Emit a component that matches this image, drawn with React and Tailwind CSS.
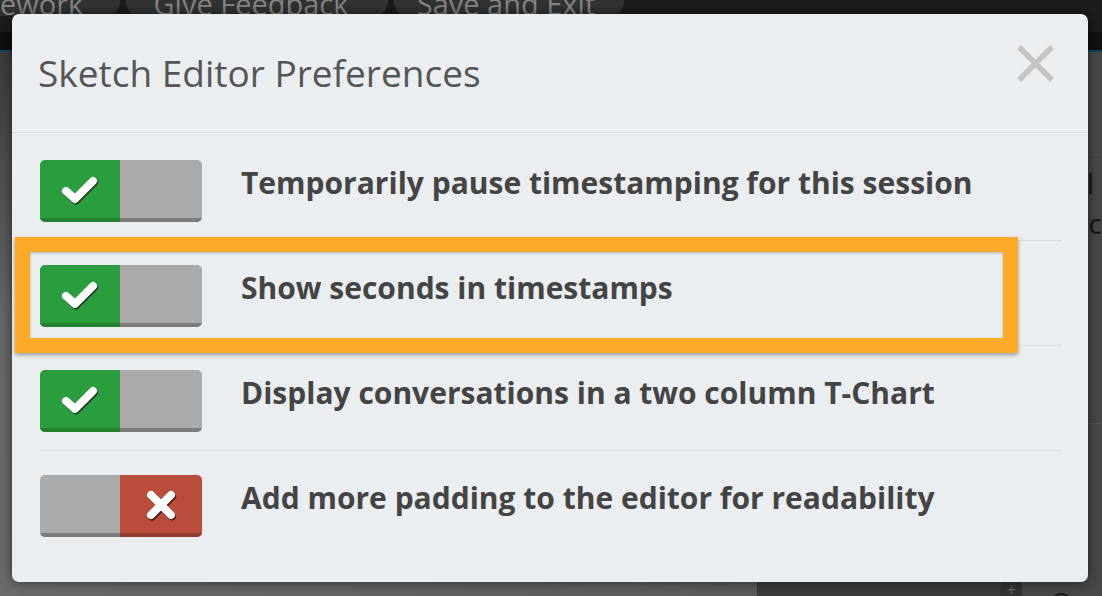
import React from 'react';

const prefs = [
  { label: 'Temporarily pause timestamping for this session', on: true },
  { label: 'Show seconds in timestamps', on: true },
  { label: 'Display conversations in a two column T-Chart', on: true },
  { label: 'Add more padding to the editor for readability', on: false },
];

function CheckMark() {
  return (
    <svg width="40" height="32" viewBox="0 0 40 32">
      <path d="M6 17 L15 25 L33 7" fill="none" stroke="#1d3a22" strokeWidth="8" strokeLinecap="round" strokeLinejoin="round" transform="translate(1 1.5)" />
      <path d="M6 17 L15 25 L33 7" fill="none" stroke="#ffffff" strokeWidth="8" strokeLinecap="round" strokeLinejoin="round" />
    </svg>
  );
}

function CrossMark() {
  return (
    <svg width="34" height="34" viewBox="0 0 34 34">
      <g transform="translate(1 1.5)" stroke="#4a1a12" strokeWidth="8" strokeLinecap="round">
        <path d="M7 7 L27 27" />
        <path d="M27 7 L7 27" />
      </g>
      <g stroke="#ffffff" strokeWidth="8" strokeLinecap="round">
        <path d="M7 7 L27 27" />
        <path d="M27 7 L7 27" />
      </g>
    </svg>
  );
}

function Toggle({ on }) {
  return (
    <div className="flex h-[62px] w-[162px] shrink-0 overflow-hidden rounded-[5px]">
      {on ? (
        <>
          <div className="flex w-[80px] items-center justify-center bg-[#2a9e3c] pb-[3px] shadow-[inset_0_-4px_0_#22812f]">
            <CheckMark />
          </div>
          <div className="flex-1 bg-[#aaaaaa] shadow-[inset_0_-4px_0_#7c7c7c]" />
        </>
      ) : (
        <>
          <div className="w-[80px] bg-[#aaaaaa] shadow-[inset_0_-4px_0_#7c7c7c]" />
          <div className="flex flex-1 items-center justify-center bg-[#b94c3b] pb-[3px] shadow-[inset_0_-4px_0_#933a2d]">
            <CrossMark />
          </div>
        </>
      )}
    </div>
  );
}

export default function App() {
  return (
    <div className="relative h-[596px] w-[1102px] overflow-hidden bg-[#5e5e5e] font-['Open_Sans',sans-serif]">
      {/* page behind the dialog, dimmed */}
      <div className="flex h-[32px] items-end gap-[6px] bg-[#1c1c1c] pb-[16px]">
        <div className="flex h-[40px] w-[120px] items-end rounded-r-[14px] bg-[#333333] text-[29px] text-[#858585]">
          <span className="-mb-[9px] ml-[0px]">ework</span>
        </div>
        <div className="flex h-[40px] w-[262px] items-end justify-center rounded-[14px] bg-[#333333] text-[29px] text-[#858585]">
          <span className="-mb-[9px] mr-[12px]">Give Feedback</span>
        </div>
        <div className="flex h-[40px] w-[230px] items-end justify-center rounded-[14px] bg-[#333333] text-[29px] text-[#858585]">
          <span className="-mb-[9px] mr-[6px]">Save and Exit</span>
        </div>
      </div>
      <div className="h-[18px] bg-[#101010]" />
      <div className="h-[2px] bg-[#0f4560]" />
      <div className="flex h-[544px]">
        <div className="flex w-[763px] flex-col">
          <div className="flex flex-1">
            <div className="w-[60px] bg-gradient-to-b from-[#3b3b3b] via-[#666666] to-[#6a6a6a]" />
            <div className="flex-1 bg-[#555555]" />
          </div>
          <div className="h-[16px] bg-gradient-to-r from-[#6a6a6a] to-[#5a5a5a]" />
        </div>
        <div className="flex w-[245px] flex-col">
          <div className="flex-1 bg-[#4c4c4c]" />
          <div className="h-[16px] bg-[#3b3b3b]" />
        </div>
        <div className="flex flex-1 flex-col bg-[#474747] text-[28px] leading-[40px] text-[#151515]">
          <div className="ml-[82px] mt-[20px] h-[34px] w-[4px] bg-[#151515]" />
          <div className="mt-[48px] border-t border-[#515151] pt-[8px] pl-[71px]">al</div>
          <div className="pl-[71px]">nc</div>
          <div className="mt-[180px] border-t border-[#555555] pt-[44px] pl-[72px]">e</div>
          <div className="mt-auto flex items-end gap-[28px] pl-[0px]">
            <div className="flex h-[14px] w-[22px] items-start justify-center rounded-t-[3px] bg-[#333333] text-[16px] leading-[16px] text-[#666666]">+</div>
            <span className="-mb-[26px] leading-[40px] text-[#1a1a1a]">Qu</span>
          </div>
        </div>
      </div>

      {/* dialog */}
      <div className="absolute left-[12px] top-[14px] flex h-[568px] w-[1076px] flex-col rounded-[7px] bg-[#eaeef0] shadow-[0_0_12px_rgba(0,0,0,0.55)]">
        <div className="flex h-[119px] shrink-0 items-start justify-between border-b border-[#dcdfe1] pl-[26px] pr-[33px]">
          <h1 className="pt-[36px] text-[37px] leading-[46px] text-[#555555]">Sketch Editor Preferences</h1>
          <svg className="mt-[30px]" width="39" height="39" viewBox="0 0 39 39">
            <path d="M3 3 L36 36 M36 3 L3 36" stroke="#c4c4c4" strokeWidth="5.5" />
          </svg>
        </div>
        <div className="pl-[28px] pr-[26px] pt-[3px]">
          {prefs.map((p, i) => (
            <div
              key={p.label}
              className={`flex items-start gap-[39px] pt-[24px] pb-[18px] ${i < prefs.length - 1 ? 'border-b border-[#dadddf]' : ''}`}
            >
              <Toggle on={p.on} />
              <div className="pt-[6px] text-[30px] font-bold leading-[34px] text-[#444444]">{p.label}</div>
            </div>
          ))}
        </div>
      </div>

      {/* highlight annotation */}
      <div className="absolute left-[15px] top-[237px] h-[116px] w-[1003px] border-[15px] border-[#fdaa28] shadow-[0_2px_4px_rgba(0,0,0,0.35),inset_0_1px_3px_rgba(0,0,0,0.25)]" />
    </div>
  );
}
